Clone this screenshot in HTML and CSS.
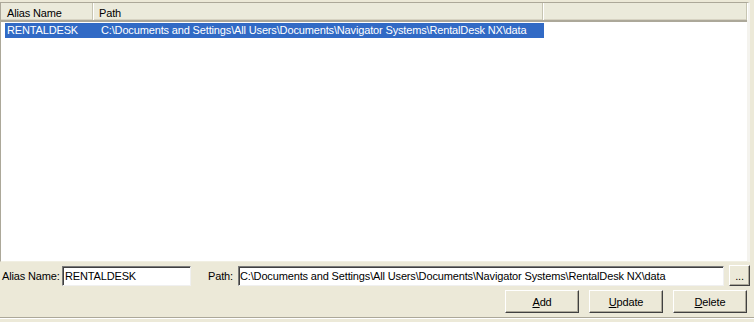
FILE: index.html
```html
<!DOCTYPE html>
<html>
<head>
<meta charset="utf-8">
<link rel="stylesheet" href="styles.css">
</head>
<body>
<div class="window">
  <div class="list">
    <div class="header">
      <div class="hcol c1">Alias Name</div>
      <div class="hcol c2">Path</div>
      <div class="hcol c3"></div>
    </div>
    <div class="rows">
      <div class="row selected">
        <span class="cell c1">RENTALDESK</span>
        <span class="cell c2">C:\Documents and Settings\All Users\Documents\Navigator Systems\RentalDesk NX\data</span>
      </div>
    </div>
  </div>
  <div class="form">
    <div class="fields">
      <label class="lbl lbl-alias">Alias Name:</label>
      <div class="edit edit-alias">RENTALDESK</div>
      <label class="lbl lbl-path">Path:</label>
      <div class="edit edit-path">C:\Documents and Settings\All Users\Documents\Navigator Systems\RentalDesk NX\data</div>
      <button class="btn btn-browse">...</button>
    </div>
    <div class="actions">
      <button class="btn btn-act"><u>A</u>dd</button>
      <button class="btn btn-act"><u>U</u>pdate</button>
      <button class="btn btn-act"><u>D</u>elete</button>
    </div>
  </div>
  <div class="sep"></div>
</div>
</body>
</html>
```

FILE: styles.css
```css
html, body {
  margin: 0;
  padding: 0;
  background: #ece9d8;
}
body {
  font-family: "Liberation Sans", Arial, sans-serif;
  font-size: 11px;
  letter-spacing: -0.15px;
  color: #000;
  width: 754px;
  height: 322px;
  overflow: hidden;
}
.window {
  display: flex;
  flex-direction: column;
  height: 322px;
}
.list {
  margin-top: 2px;
  width: 746px;
  height: 258px;
  background: #fff;
  border-left: 1px solid #aca899;
  border-top: 1px solid #aca899;
  border-right: 3px solid #f4f3ee;
  border-bottom: 1px solid #f1efe2;
  box-shadow: inset 1px 1px 0 #fff;
}
.header {
  display: flex;
  height: 17px;
  background: #ebeadb;
  border-bottom: 2px solid #aca899;
  box-shadow: 0 -1px 0 #d6d2c2 inset;
}
.hcol {
  height: 17px;
  line-height: 15px;
  padding-top: 3px;
  padding-left: 6px;
  box-sizing: border-box;
  border-right: 1px solid #c7c5b2;
  box-shadow: 1px 0 0 #fff;
}
.hcol.c1 { width: 92px; }
.hcol.c2 { width: 450px; }
.hcol.c3 { flex: 1; }
.rows {
  padding-top: 1px;
}
.row {
  display: flex;
  height: 15px;
  line-height: 15px;
  margin-left: 4px;
  width: 539px;
}
.row.selected {
  background: #316ac5;
  color: #fff;
}
.cell.c1 { width: 93px; padding-left: 2px; box-sizing: border-box; }
.cell.c2 { padding-left: 3px; white-space: nowrap; }
.form {
  padding-top: 3px;
  display: flex;
  flex-direction: column;
}
.fields {
  display: flex;
  align-items: center;
  height: 21px;
}
.lbl-alias { margin-left: 2px; width: 60px; }
.edit {
  height: 20px;
  line-height: 18px;
  box-sizing: border-box;
  background: #fff;
  border-top: 1px solid #7a7a7a;
  border-left: 1px solid #7a7a7a;
  border-right: 1px solid #f0f0f0;
  border-bottom: 1px solid #f0f0f0;
  box-shadow: inset 1px 1px 0 #404040;
  padding-left: 2px;
  white-space: nowrap;
  overflow: hidden;
}
.edit-alias { width: 129px; }
.lbl-path { margin-left: 17px; width: 30px; }
.edit-path { width: 486px; padding-left: 1px; }
.btn {
  font-family: "Liberation Sans", Arial, sans-serif;
  font-size: 11px;
  letter-spacing: -0.15px;
  color: #000;
  background: #ece9d8;
  box-sizing: border-box;
  border-top: 1px solid #fff;
  border-left: 1px solid #fff;
  border-right: 1px solid #404040;
  border-bottom: 1px solid #404040;
  box-shadow: inset -1px -1px 0 #aca899;
  padding: 0;
  cursor: default;
}
.btn-browse {
  margin-left: 5px;
  width: 21px;
  height: 21px;
  line-height: 14px;
}
.actions {
  display: flex;
  justify-content: flex-end;
  gap: 10px;
  margin-top: 4px;
  margin-right: 7px;
}
.btn-act {
  width: 74px;
  height: 23px;
}
.sep {
  margin-top: auto;
  margin-bottom: 3px;
  height: 1px;
  background: #aca899;
  border-bottom: 1px solid #fff;
}
```
